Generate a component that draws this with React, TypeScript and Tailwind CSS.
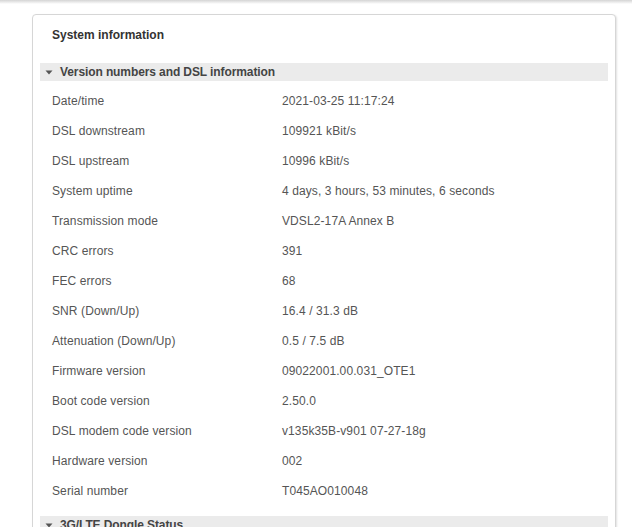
import React from 'react';

const rows: [string, string][] = [
  ['Date/time', '2021-03-25 11:17:24'],
  ['DSL downstream', '109921 kBit/s'],
  ['DSL upstream', '10996 kBit/s'],
  ['System uptime', '4 days, 3 hours, 53 minutes, 6 seconds'],
  ['Transmission mode', 'VDSL2-17A Annex B'],
  ['CRC errors', '391'],
  ['FEC errors', '68'],
  ['SNR (Down/Up)', '16.4 / 31.3 dB'],
  ['Attenuation (Down/Up)', '0.5 / 7.5 dB'],
  ['Firmware version', '09022001.00.031_OTE1'],
  ['Boot code version', '2.50.0'],
  ['DSL modem code version', 'v135k35B-v901 07-27-18g'],
  ['Hardware version', '002'],
  ['Serial number', 'T045AO010048'],
];

const SectionHeader = ({ title }: { title: string }) => (
  <div className="flex items-center h-[18px] bg-[#ebebeb] pl-[5px] text-[12px] font-bold text-[#444]">
    <svg width="8" height="5" viewBox="0 0 8 5" className="mr-[7px] mt-[1px]">
      <path d="M0.5 0.5 L7.5 0.5 L4 4.5 Z" fill="#555" />
    </svg>
    <span className="tracking-[-0.1px]">{title}</span>
  </div>
);

export default function App() {
  return (
    <div className="w-[632px] h-[527px] overflow-hidden bg-white" style={{ fontFamily: '"Liberation Sans", Arial, sans-serif' }}>
      <div className="h-[4px] bg-gradient-to-b from-[#d4d4d4] to-white" />
      <div className="ml-[32px] mt-[10px] w-[584px] bg-white border border-[#d6d6d6] rounded-[4px] shadow-[1px_1px_2px_rgba(0,0,0,0.12)] px-[7px] pb-[20px]">
        <div className="h-[48px] flex items-start pt-[11px] pl-[12px] text-[12px] font-bold text-[#333]">
          System information
        </div>
        <SectionHeader title="Version numbers and DSL information" />
        <div className="pt-[5px] pb-[10px]">
          {rows.map(([k, v]) => (
            <div key={k} className="flex items-center h-[30px] text-[12px] text-[#555] tracking-[0.1px]">
              <div className="w-[242px] pl-[12px]">{k}</div>
              <div>{v}</div>
            </div>
          ))}
        </div>
        <SectionHeader title="3G/LTE Dongle Status" />
      </div>
    </div>
  );
}
